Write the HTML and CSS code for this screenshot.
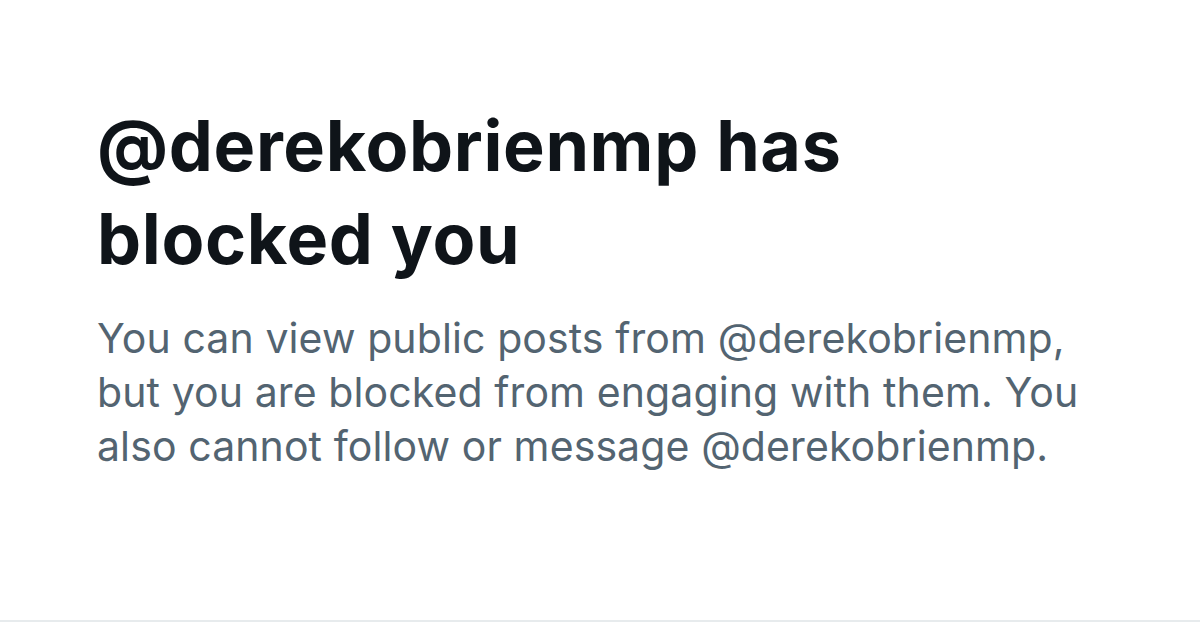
FILE: index.html
```html
<!DOCTYPE html>
<html>
<head>
<meta charset="utf-8">
<link rel="stylesheet" href="styles.css">
</head>
<body>
<main class="page">
  <section class="notice">
    <h1 class="title">@derekobrienmp has blocked you</h1>
    <p class="desc">You can view public posts from @derekobrienmp, but you are blocked from engaging with them. You also cannot follow or message @derekobrienmp.</p>
  </section>
</main>
</body>
</html>
```

FILE: styles.css
```css
html, body {
  margin: 0;
  padding: 0;
  background: #ffffff;
}
.page {
  width: 1200px;
  height: 622px;
  box-sizing: border-box;
  border-bottom: 2px solid #e7ebed;
  padding: 99px 0 0 97px;
}
.notice {
  width: 1000px;
}
.title {
  margin: 0;
  max-width: 880px;
  font-family: Inter, "Liberation Sans", sans-serif;
  font-weight: 700;
  font-size: 70px;
  line-height: 93px;
  color: #0f1419;
  letter-spacing: 0.65px;
}
.desc {
  margin: 26px 0 0 0;
  font-family: Inter, "Liberation Sans", sans-serif;
  font-weight: 400;
  font-size: 41px;
  line-height: 54px;
  color: #536471;
  letter-spacing: 0.1px;
}
```
